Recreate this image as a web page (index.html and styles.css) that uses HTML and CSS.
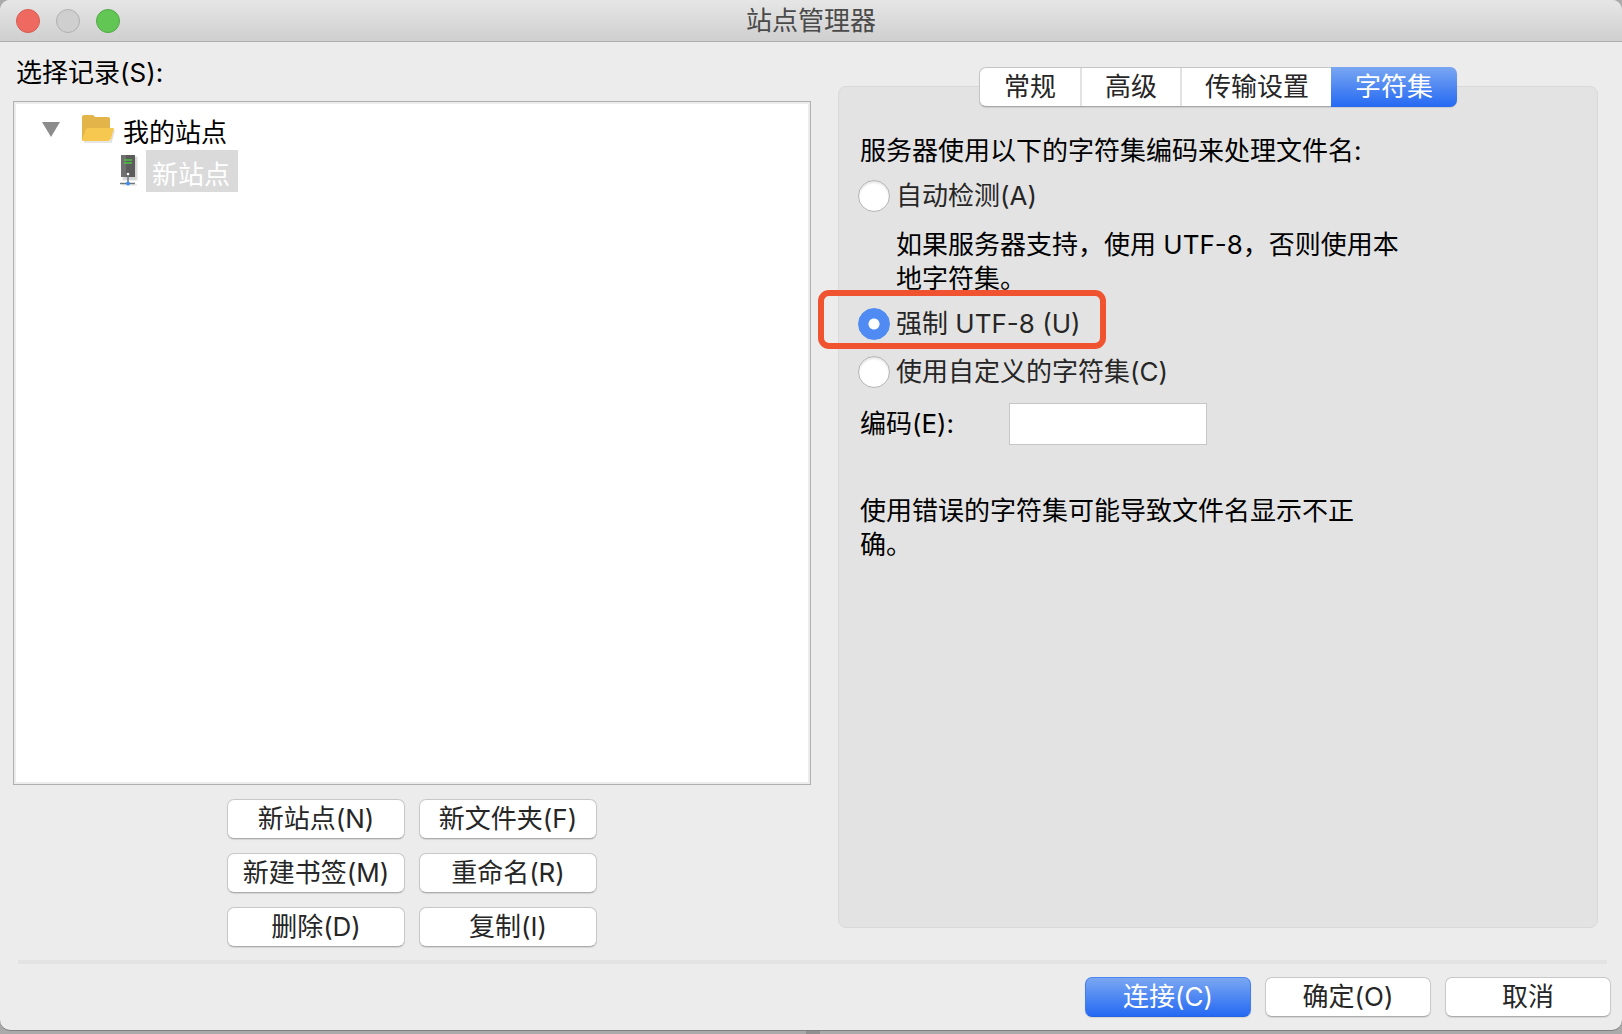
FILE: index.html
```html
<!DOCTYPE html>
<html lang="zh-CN">

<head>
    <meta charset="utf-8">
    <title>站点管理器</title>
    <link rel="stylesheet" href="styles.css">
</head>

<body>
    <div class="window">
        <header class="titlebar">
            <div class="lights">
                <button class="light close" aria-label="关闭"></button>
                <button class="light minimize" aria-label="最小化" disabled></button>
                <button class="light maximize" aria-label="缩放"></button>
            </div>
            <h1>站点管理器</h1>
        </header>

        <main>
            <section class="sites">
                <h2 id="tree-label">选择记录(S):</h2>
                <ul class="tree" role="tree" aria-labelledby="tree-label">
                    <li role="treeitem" aria-expanded="true">
                        <div class="tree-row">
                            <svg class="arrow" width="18" height="15" viewBox="0 0 18 15">
                                <path d="M0 0h18L9 15z" fill="#8c8c8c" />
                            </svg>
                            <svg class="folder" width="33" height="28" viewBox="0 0 33 28">
                                <path d="M2 27h27l3-11v-1l-3 12z" fill="#d9d9d9" stroke="#dedede" stroke-width="1.5" />
                                <path d="M0 2q0-2 2-2h8q2 0 3 2h13q2 0 2 2v11H0z" fill="#e3b44a" />
                                <path d="M0 2v23h4V15h24V4z" fill="#e3b44a" />
                                <path d="M4 14q1-1 2-1h26l-3 11q-1 2-3 2H1q-1 0-1-1z" fill="#f6c850" />
                            </svg>
                            <span>我的站点</span>
                        </div>
                        <ul role="group">
                            <li role="treeitem" aria-selected="true">
                                <div class="tree-row">
                                    <svg class="server" width="18" height="32" viewBox="0 0 18 32">
                                        <path d="M3 2h14v23H3zM2 30h15" fill="#d4d4d4" stroke="#dedede" />
                                        <path d="M1 0h14v22H1z" fill="#5c5c5c" />
                                        <path d="M1 0h5v22H1z" fill="#707070" />
                                        <path d="M4 5h8M4 8h8" stroke="#4fc143" stroke-width="1.5" />
                                        <path d="M8 19v8M0 28.500h15" stroke="#6e7680" stroke-width="1.500" />
                                        <circle cx="8" cy="19" r="1.300" fill="#fff" />
                                        <circle cx="8" cy="28.500" r="2" fill="#3e8ee8" />
                                    </svg>
                                    <span class="selected">新站点</span>
                                </div>
                            </li>
                        </ul>
                    </li>
                </ul>
                <div class="site-actions">
                    <button class="btn">新站点(N)</button>
                    <button class="btn">新文件夹(F)</button>
                    <button class="btn">新建书签(M)</button>
                    <button class="btn">重命名(R)</button>
                    <button class="btn">删除(D)</button>
                    <button class="btn">复制(I)</button>
                </div>
            </section>

            <section class="panel">
                <div class="tabs" role="tablist">
                    <button role="tab">常规</button>
                    <button role="tab">高级</button>
                    <button role="tab">传输设置</button>
                    <button role="tab" class="active" aria-selected="true">字符集</button>
                </div>
                <form class="charset">
                    <p>服务器使用以下的字符集编码来处理文件名:</p>
                    <label class="option">
                        <input type="radio" name="charset">自动检测(A)
                    </label>
                    <p class="hint">如果服务器支持，使用 UTF-8，否则使用本地字符集。</p>
                    <div class="option-wrap">
                        <label class="option">
                            <input type="radio" name="charset" checked>强制 UTF-8 (U)
                        </label>
                        <div class="marker"></div>
                    </div>
                    <label class="option">
                        <input type="radio" name="charset">使用自定义的字符集(C)
                    </label>
                    <div class="encoding">
                        <label for="encoding">编码(E):</label>
                        <input id="encoding" type="text">
                    </div>
                    <p class="note">使用错误的字符集可能导致文件名显示不正确。</p>
                </form>
            </section>
        </main>

        <hr class="divider">

        <footer>
            <button class="btn primary">连接(C)</button>
            <button class="btn">确定(O)</button>
            <button class="btn">取消</button>
        </footer>
    </div>
</body>

</html>
```
FILE: styles.css
```css
* {
    box-sizing: border-box;
}

body {
    margin: 0;
    padding-bottom: 4px;
    background: linear-gradient(90deg, #aaa 806px, #909090 806px, #909090 820px, #aaa 820px);
    color: #000;
    font: 26px/34px Inter, "Noto Sans CJK SC", sans-serif;
}

h1, h2, p, ul {
    margin: 0;
    padding: 0;
    font-size: 26px;
    font-weight: 400;
    list-style: none;
}

button, input {
    margin: 0;
    padding: 0;
    font: inherit;
}

.window {
    display: flex;
    flex-direction: column;
    min-height: calc(100vh - 4px);
    background: #ececec;
    border-radius: 10px;
    box-shadow: 0 1px 0 #808080;
}

/* Title bar */
.titlebar {
    display: grid;
    grid-template-columns: 1fr auto 1fr;
    align-items: center;
    height: 42px;
    padding: 0 16px;
    background: linear-gradient(#e6e6e6, #cfcfcf);
    border-bottom: 1px solid #adadad;
    border-radius: 10px 10px 0 0;
}

.titlebar h1 {
    color: #4a4a4a;
}

.lights {
    display: flex;
    gap: 16px;
}

.light {
    width: 24px;
    height: 24px;
    border: 1px solid #b0b0b0;
    border-radius: 50%;
    background: #cfcfcf;
}

.close {
    background: #ee6a60;
    border-color: #d75a50;
}

.maximize {
    background: #62c655;
    border-color: #50a945;
}

main {
    flex: 1;
    display: grid;
    grid-template-columns: 21fr 20fr;
    gap: 27px;
    padding: 14px 24px 13px 13px;
}

/* Site tree */
.sites {
    display: flex;
    flex-direction: column;
}

.sites h2 {
    padding-left: 3px;
}

.tree {
    flex: 1;
    margin-top: 11px;
    padding: 6px 28px;
    background: #fff;
    border: 1px solid #b0b0b0;
    box-shadow: inset 0 0 0 2px #ececec;
}

.tree-row {
    display: flex;
    align-items: center;
    height: 42px;
}

.tree-row span {
    padding-top: 8px;
}

.folder {
    margin: 0 8px 0 22px;
}

.server {
    margin: 0 8px 0 78px;
}

.tree-row .selected {
    padding: 8px 8px 0 6px;
    background: #dadada;
    color: #fff;
}

.site-actions {
    display: grid;
    grid-template-columns: 178px 178px;
    justify-content: center;
    gap: 14px;
    margin-top: 14px;
}

/* Push buttons */
.btn {
    height: 40px;
    background: #fff;
    border: 1px solid #c8c8c8;
    border-bottom-color: #adadad;
    border-radius: 7px;
    box-shadow: 0 1px 1px rgba(0, 0, 0, 0.1);
    color: #262626;
}

.primary, .tabs .active {
    background: linear-gradient(#7aa7f2, #2569f3);
    color: #fff;
}

.primary {
    border-color: #4c86ee #3f7df0 #2563e0;
}

/* Settings panel */
.panel {
    margin: 30px 0 19px;
    background: #e3e3e3;
    border: 1px solid #d9d9d9;
    border-radius: 8px;
}

.tabs {
    display: flex;
    width: max-content;
    height: 40px;
    margin: -20px auto 0;
    background: #fff;
    border: 1px solid #c4c4c4;
    border-bottom-color: #a8a8a8;
    border-radius: 7px;
    box-shadow: 0 1px 1px rgba(0, 0, 0, 0.1);
}

.tabs button {
    padding: 0 23px;
    background: none;
    border: 0;
    border-right: 2px solid #e2e2e2;
    color: #262626;
}

.tabs button:first-child, .tabs button:last-child {
    padding: 0 24px;
}

.tabs button:nth-child(3) {
    border-right: 0;
}

.tabs .active {
    margin: -1px;
    border: 0;
    border-radius: 0 7px 7px 0;
}

.charset {
    display: flex;
    flex-direction: column;
    padding: 27px 19px;
}

.charset p {
    max-width: 518px;
    margin-left: 2px;
}

.option {
    display: flex;
    align-items: center;
    gap: 6px;
    height: 48px;
    color: #262626;
}

.charset p + .option {
    margin-top: 4px;
}

.option input {
    appearance: none;
    width: 32px;
    height: 32px;
    background: #fff;
    border: 1px solid #b4b4b4;
    border-radius: 50%;
    box-shadow: inset 0 2px 2px rgba(0, 0, 0, 0.1);
}

.option input:checked {
    background: radial-gradient(circle, #fff 5px, #4f8bf3 6px);
    border-color: #4f8bf3;
    box-shadow: none;
}

.charset .hint {
    margin: 8px 0 4px 38px;
}

.option-wrap {
    position: relative;
}

/* Red frame drawn around the chosen option */
.marker {
    position: absolute;
    top: -10px;
    left: -40px;
    width: 288px;
    height: 59px;
    border: 6px solid #f05330;
    border-radius: 11px;
}

.encoding {
    display: flex;
    align-items: center;
    margin: 7px 0 0 2px;
}

.encoding label {
    width: 149px;
}

.encoding input {
    width: 198px;
    height: 42px;
    padding: 0 6px;
    background: #fff;
    border: 1px solid #c6c6c6;
}

.charset .note {
    margin-top: 49px;
}

.divider {
    height: 4px;
    margin: 0 15px 0 18px;
    background: #e3e3e3;
    border: 0;
}

footer {
    display: flex;
    justify-content: flex-end;
    gap: 14px;
    padding: 13px 11px;
}

footer .btn {
    width: 166px;
}
```
